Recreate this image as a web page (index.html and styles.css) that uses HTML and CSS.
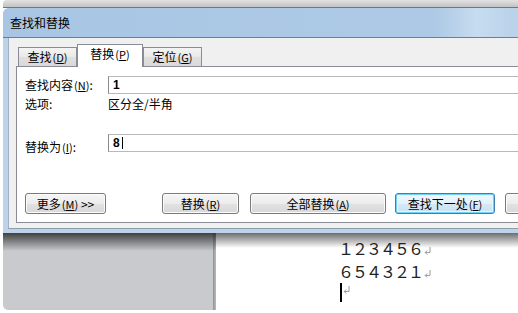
FILE: index.html
```html
<!DOCTYPE html>
<html lang="zh-CN">
<head>
    <meta charset="UTF-8">
    <title>查找和替换</title>
    <link rel="stylesheet" href="styles.css">
</head>
<body>

    <div class="topband"></div>

    <div class="dialog">
        <div class="titlebar">查找和替换</div>
        <div class="frame">
            <div class="client">
                <div class="tabs">
                    <div class="tab">查找<span class="acc">(<u>D</u>)</span></div>
                    <div class="tab active">替换<span class="acc">(<u>P</u>)</span></div>
                    <div class="tab">定位<span class="acc">(<u>G</u>)</span></div>
                </div>

                <div class="panel">
                    <div class="row">
                        <span class="label">查找内容<span class="acc">(<u>N</u>)</span>:</span>
                        <div class="field">1</div>
                    </div>
                    <div class="row options">
                        <span class="label">选项:</span>
                        <span>区分全/半角</span>
                    </div>
                    <div class="row replace">
                        <span class="label">替换为<span class="acc">(<u>I</u>)</span>:</span>
                        <div class="field">8<span class="text-caret"></span></div>
                    </div>

                    <div class="buttons">
                        <button class="btn more">更多<span class="acc">(<u>M</u>)</span> &gt;&gt;</button>
                        <button class="btn replace-one">替换<span class="acc">(<u>R</u>)</span></button>
                        <button class="btn replace-all">全部替换<span class="acc">(<u>A</u>)</span></button>
                        <button class="btn find-next">查找下一处<span class="acc">(<u>F</u>)</span></button>
                        <button class="btn cancel"></button>
                    </div>
                </div>
            </div>
        </div>
    </div>

    <div class="word">
        <div class="side"></div>
        <div class="edge"></div>
        <div class="page">
            <p class="line">１２３４５６<svg class="ret" width="7" height="8" viewBox="0 0 7 8"><path d="M6 0V5.5H1.2M3.2 3.5L1.2 5.5L3.2 7.5" fill="none" stroke="#9a9a9a" stroke-width="1"/></svg></p>
            <p class="line">６５４３２１<svg class="ret" width="7" height="8" viewBox="0 0 7 8"><path d="M6 0V5.5H1.2M3.2 3.5L1.2 5.5L3.2 7.5" fill="none" stroke="#9a9a9a" stroke-width="1"/></svg></p>
            <p class="line"><span class="caret"></span><svg class="ret raised" width="7" height="8" viewBox="0 0 7 8"><path d="M6 0V5.5H1.2M3.2 3.5L1.2 5.5L3.2 7.5" fill="none" stroke="#9a9a9a" stroke-width="1"/></svg></p>
        </div>
    </div>

</body>
</html>
```

FILE: styles.css
```css
* {
    box-sizing: border-box;
}

body {
    margin: 0;
    width: 518px;
    height: 313px;
    overflow: hidden;
    background-color: #fff;
    font-family: "Noto Sans CJK SC", "Liberation Sans", sans-serif;
    font-size: 12px;
    color: #000;
}

u {
    text-decoration: underline;
}

.acc {
    margin-left: 1px;
    font-size: 11px;
}

.topband {
    height: 8px;
    margin-left: 3px;
    border-radius: 4px 0 0 0;
    background: linear-gradient(#e2e2e2, #c2c2c2);
    border-bottom: 1px solid #767676;
}

.dialog {
    margin-left: 3px;
    width: 600px;
    border-radius: 6px 0 0 0;
    overflow: hidden;
    background-color: #bcd3ea;
}

.titlebar {
    height: 30px;
    line-height: 29px;
    padding-left: 7px;
    border-bottom: 1px solid #6f7e8e;
    background: linear-gradient(90deg, #a8c6e4 0%, #adc9e5 72%, #c7dcf0 79%, #bad2ea 85%, #cbdef1 100%);
}

.frame {
    padding: 0 0 4px 5px;
}

.client {
    background-color: #f0f0f0;
    border-left: 1px solid #a3b0bf;
    border-bottom: 1px solid #8f9cab;
    padding: 6px 0 5px 7px;
}

/* tab strip */
.tabs {
    display: flex;
    align-items: flex-end;
    height: 22px;
    margin-left: 2px;
}

.tab {
    width: 59px;
    height: 19px;
    border: 1px solid #898c95;
    border-bottom: 0;
    background: linear-gradient(#f4f4f4, #e9e9e9 50%, #e0e0e0 50%, #d9d9d9);
    text-align: center;
    line-height: 18px;
}

.tab.active {
    position: relative;
    z-index: 1;
    width: 66px;
    height: 23px;
    margin-bottom: -1px;
    background: #fff;
    line-height: 18px;
}

/* panel */
.panel {
    width: 580px;
    height: 157px;
    border: 1px solid #898c95;
    background-color: #fff;
    padding: 9px 0 0 8px;
}

.row {
    display: flex;
    align-items: flex-start;
    height: 18px;
}

.label {
    width: 83px;
    line-height: 18px;
}

.field {
    flex: 1;
    height: 18px;
    border: 1px solid #b9b9b9;
    border-left-color: #8a8a8a;
    padding-left: 4px;
    font-family: "Liberation Sans", sans-serif;
    font-weight: bold;
    font-size: 12px;
    line-height: 16px;
}

.text-caret {
    display: inline-block;
    width: 1px;
    height: 12px;
    margin-left: 2px;
    vertical-align: -2px;
    background-color: #000;
}

.options {
    margin-top: 3px;
    height: 14px;
}

.options span {
    line-height: 14px;
}

.replace {
    margin-top: 23px;
}

.replace .label {
    margin-top: 4px;
}

/* buttons */
.buttons {
    display: flex;
    margin-top: 41px;
}

.btn {
    flex-shrink: 0;
    height: 21px;
    padding: 0;
    border: 1px solid #7a7a7a;
    border-radius: 3px;
    background: linear-gradient(#f6f6f6, #ececec 50%, #e2e2e2 50%, #d8d8d8);
    box-shadow: inset 0 0 0 1px #fcfcfc;
    font-family: inherit;
    font-size: 12px;
    color: #000;
    line-height: 19px;
    text-align: center;
}

.more {
    width: 81px;
}

.replace-one {
    width: 77px;
    margin-left: 56px;
}

.replace-all {
    width: 136px;
    margin-left: 11px;
}

.find-next {
    width: 100px;
    margin-left: 9px;
    border-color: #3c7fb1;
    box-shadow: inset 0 0 0 1px #6fd3f5, inset 0 0 0 2px #e2f6fd;
    background: linear-gradient(#f1f8fd, #e3f1fb 50%, #d5e8f6 50%, #cce2f3);
}

.cancel {
    width: 80px;
    margin-left: 10px;
}

/* document window below */
.word {
    display: flex;
    height: 77px;
    margin-left: 3px;
    border-radius: 0 0 0 5px;
    overflow: hidden;
}

.side {
    width: 210px;
    background: linear-gradient(rgba(30, 30, 30, 0.8), rgba(30, 30, 30, 0) 18px), #c8cacd;
}

.edge {
    width: 3px;
    background: linear-gradient(rgba(30, 30, 30, 0.8), rgba(30, 30, 30, 0) 18px), linear-gradient(90deg, #8f9195, #b9bbbe);
}

.page {
    flex: 1;
    background: linear-gradient(rgba(30, 30, 30, 0.65), rgba(30, 30, 30, 0) 15px), #fff;
    padding: 4px 0 0 122px;
    font-size: 16px;
    letter-spacing: -2px;
    line-height: 23px;
    color: #222;
}

.line {
    margin: 0;
    height: 23px;
}

.ret {
    margin-left: 2px;
    vertical-align: baseline;
}

.ret.raised {
    margin-left: 1px;
    vertical-align: 7px;
}

.caret {
    display: inline-block;
    width: 2px;
    height: 19px;
    margin-left: 2px;
    vertical-align: top;
    background-color: #000;
}
```
